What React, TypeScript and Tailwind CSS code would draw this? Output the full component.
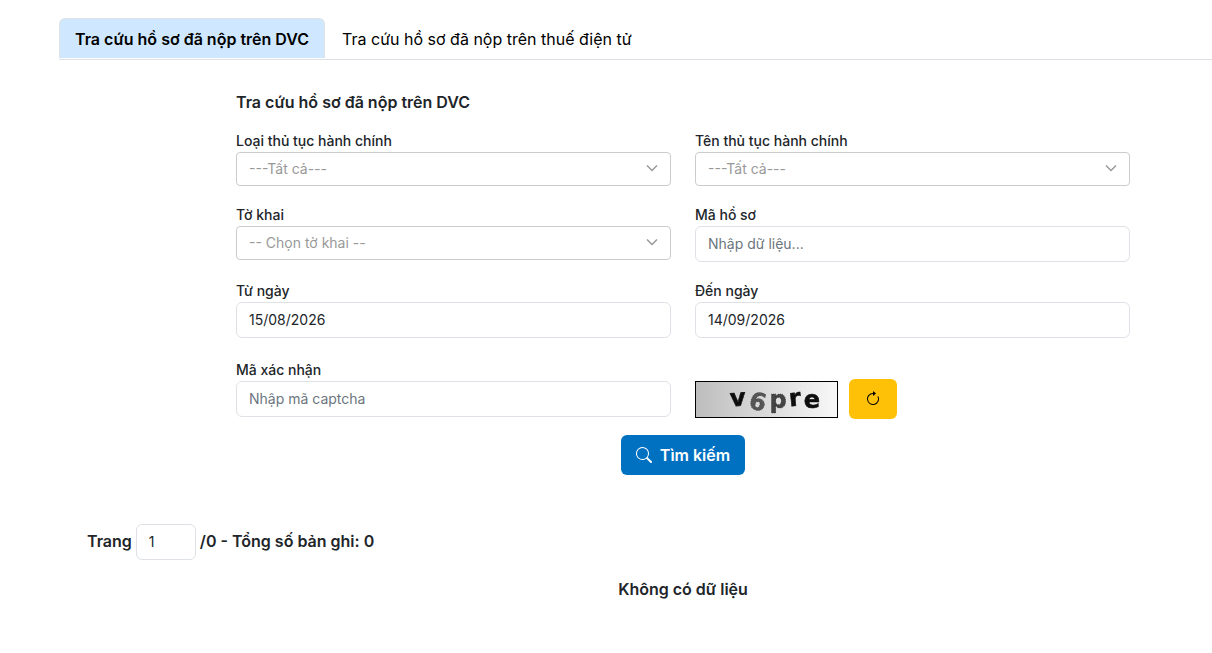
import { useState } from 'react';
import type { ReactNode } from 'react';
import { BsArrowClockwise, BsSearch } from 'react-icons/bs';

const tabs = [
  { id: 'dvc', label: 'Tra cứu hồ sơ đã nộp trên DVC' },
  { id: 'tdt', label: 'Tra cứu hồ sơ đã nộp trên thuế điện tử' },
];

const inputClass =
  'block h-9 w-full rounded-md border border-[#dee2e6] bg-white px-3 pb-0.5 text-sm font-normal text-[#212529] placeholder:text-[#6c757d] outline-none focus:border-blue-300';

function Field({ id, label, children }: { id: string; label: string; children: ReactNode }) {
  return (
    <div>
      <label htmlFor={id} className="mb-0.5 block text-sm leading-[19px] font-medium">
        {label}
      </label>
      {children}
    </div>
  );
}

function SelectBox({ id, placeholder }: { id: string; placeholder: string }) {
  return (
    <div className="relative">
      <select
        id={id}
        className="block h-[34px] w-full appearance-none rounded border border-[#ccc] bg-white px-3 text-sm text-[#999] outline-none"
      >
        <option value="">{placeholder}</option>
      </select>
      <svg
        viewBox="0 0 12 12"
        className="pointer-events-none absolute top-[10px] right-[13px] h-3 w-3"
        fill="none"
        stroke="#999"
        strokeWidth="1.5"
      >
        <path d="M1 3.5 6 8.5l5-5" />
      </svg>
    </div>
  );
}

function Captcha() {
  return (
    <svg viewBox="0 0 143 37" className="h-[37px] w-[143px]" role="img" aria-label="Captcha">
      <defs>
        <linearGradient id="captchaBg" x1="0" x2="1" y1="0" y2="0">
          <stop offset="0" stopColor="#bdbdbd" />
          <stop offset="1" stopColor="#f8f8f8" />
        </linearGradient>
        <filter id="captchaBlur">
          <feGaussianBlur stdDeviation="0.6" />
        </filter>
      </defs>
      <rect x="0.5" y="0.5" width="142" height="36" fill="url(#captchaBg)" stroke="#000" />
      <g
        fill="#111"
        stroke="#111"
        strokeWidth="0.6"
        fontFamily='"DejaVu Sans", sans-serif'
        fontWeight="700"
        fontSize="24"
        textAnchor="middle"
        filter="url(#captchaBlur)"
      >
        <text x="43" y="25" transform="rotate(-4 43 20)">v</text>
        <text x="63" y="29" transform="rotate(14 63 20)" fill="#555" stroke="#333" strokeDasharray="1 1">6</text>
        <text x="83" y="27" fill="#444" stroke="#222" strokeDasharray="1 1">p</text>
        <text x="100" y="25" transform="rotate(-6 100 20)">r</text>
        <text x="117" y="27">e</text>
      </g>
    </svg>
  );
}

export default function App() {
  const [tab, setTab] = useState('dvc');
  const [fromDate, setFromDate] = useState('15/08/2026');
  const [toDate, setToDate] = useState('14/09/2026');
  const [page, setPage] = useState('1');

  return (
    <main className="bg-white pt-[18px] pb-12 pl-[59px] font-['Inter',sans-serif] text-base text-[#212529]">
      <div role="tablist" className="flex border-b border-[#dee2e6] pb-px">
        {tabs.map((t) => (
          <button
            key={t.id}
            type="button"
            role="tab"
            aria-selected={tab === t.id}
            onClick={() => setTab(t.id)}
            className={
              tab === t.id
                ? 'h-10 rounded-t-md border border-b-0 border-[#dee2e6] bg-[#d0e8ff] px-[15px] font-semibold text-black'
                : 'h-10 border border-b-0 border-transparent px-4 text-black'
            }
          >
            {t.label}
          </button>
        ))}
      </div>

      <form className="pt-[30px] pr-[82px] pl-[177px]" onSubmit={(e) => e.preventDefault()}>
        <h2 className="mb-[17px] leading-6 font-semibold">Tra cứu hồ sơ đã nộp trên DVC</h2>

        <div className="grid grid-cols-2 gap-x-6 gap-y-[19px]">
          <Field id="procType" label="Loại thủ tục hành chính">
            <SelectBox id="procType" placeholder="---Tất cả---" />
          </Field>
          <Field id="procName" label="Tên thủ tục hành chính">
            <SelectBox id="procName" placeholder="---Tất cả---" />
          </Field>
          <Field id="declaration" label="Tờ khai">
            <SelectBox id="declaration" placeholder="-- Chọn tờ khai --" />
          </Field>
          <Field id="fileCode" label="Mã hồ sơ">
            <input id="fileCode" type="text" placeholder="Nhập dữ liệu..." className={inputClass} />
          </Field>
          <Field id="fromDate" label="Từ ngày">
            <input id="fromDate" type="text" value={fromDate} onChange={(e) => setFromDate(e.target.value)} className={inputClass} />
          </Field>
          <Field id="toDate" label="Đến ngày">
            <input id="toDate" type="text" value={toDate} onChange={(e) => setToDate(e.target.value)} className={inputClass} />
          </Field>
          <div className="pt-[3px]">
            <Field id="captcha" label="Mã xác nhận">
              <input id="captcha" type="text" placeholder="Nhập mã captcha" className={inputClass} />
            </Field>
          </div>
          <div className="flex items-center gap-[11px] pt-[22px]">
            <Captcha />
            <button
              type="button"
              aria-label="Đổi mã captcha"
              className="flex h-10 w-12 items-center justify-center rounded-md bg-[#ffc107] text-black"
            >
              <BsArrowClockwise className="h-4 w-4" />
            </button>
          </div>
        </div>

        <div className="mt-4 flex justify-center">
          <button
            type="submit"
            className="flex h-10 items-center gap-2 rounded-md bg-[#0071c1] px-[15px] font-semibold text-white"
          >
            <BsSearch className="h-4 w-4" />
            Tìm kiếm
          </button>
        </div>
      </form>

      <div className="mt-[49px] flex items-center gap-1 pl-7 font-semibold">
        <label htmlFor="page" className="pb-0.5">Trang</label>
        <div className="w-[60px]">
          <input id="page" type="text" value={page} onChange={(e) => setPage(e.target.value)} className={inputClass} />
        </div>
        <span className="pb-0.5">/0 - Tổng số bản ghi: 0</span>
      </div>

      <p className="mt-[17px] pr-[82px] pl-[177px] text-center leading-6 font-semibold">Không có dữ liệu</p>
    </main>
  );
}
